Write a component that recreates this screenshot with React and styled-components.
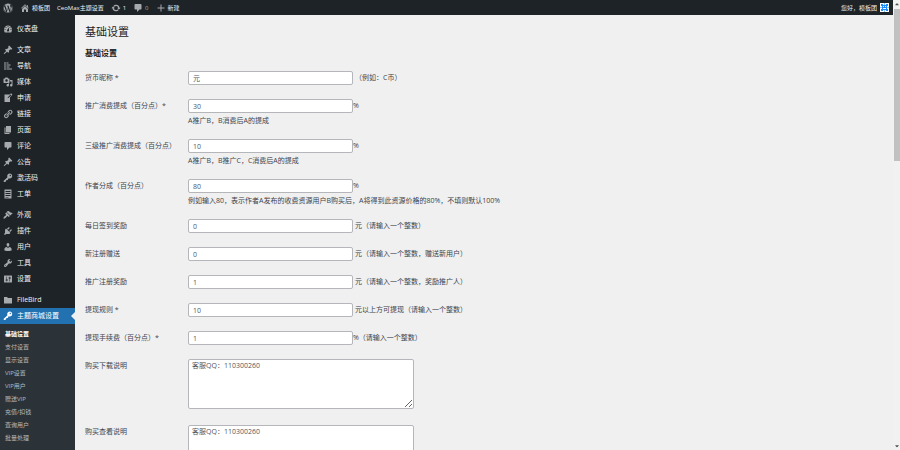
import React from "react";
import styled, { createGlobalStyle } from "styled-components";
import { FaWordpress, FaCaretUp, FaCaretDown } from "react-icons/fa";

const paths = {
    home: "M16 8.5l1.53 1.53-1.06 1.06L10 4.6l-6.47 6.49-1.06-1.06L10 2.5l4 4v-2h2v4zm-6-2.46l6 5.99V18h-4v-5H8v5H4v-5.97z",
    update: "M10.2 3.28c3.53 0 6.43 2.61 6.92 6h2.08l-3.5 4-3.5-4h2.32c-.45-1.97-2.21-3.45-4.32-3.45-1.45 0-2.73.71-3.54 1.78L4.95 5.66C6.23 4.2 8.11 3.28 10.2 3.28zm-.4 13.44c-3.52 0-6.43-2.61-6.92-6H.8l3.5-4 3.5 4H5.48c.45 1.97 2.21 3.45 4.32 3.45 1.45 0 2.73-.71 3.54-1.78l1.71 1.95c-1.28 1.46-3.15 2.38-5.25 2.38z",
    comment: "M5 2h10q.82 0 1.41.59T17 4v7q0 .82-.59 1.41T15 13h-2l-5 5v-5H5q-.82 0-1.41-.59T3 11V4q0-.82.59-1.41T5 2z",
    plus: "M17 9v2h-6v6H9v-6H3V9h6V3h2v6h6z",
    dashboard: "M3.76 17h12.48A7.98 7.98 0 0 0 18 11c0-4.42-3.58-8-8-8s-8 3.58-8 8c0 2.2.66 4.5 1.76 6zM10 4a1 1 0 1 1 0 2 1 1 0 0 1 0-2zM6 6a1 1 0 1 1 0 2 1 1 0 0 1 0-2zm8 0a1 1 0 1 1 0 2 1 1 0 0 1 0-2zm-5.37 5.55L12 7v6c0 1.1-.9 2-2 2s-2-.9-2-2c0-.57.24-1.08.63-1.45zM4 10a1 1 0 1 1 0 2 1 1 0 0 1 0-2zm12 0a1 1 0 1 1 0 2 1 1 0 0 1 0-2z",
    pin: "M10.44 3.02l1.82-1.82 6.36 6.35-1.83 1.82c-1.05-.68-2.48-.57-3.41.36l-.75.75c-.92.93-1.04 2.35-.35 3.41l-1.83 1.82-2.41-2.41-2.8 2.79c-.42.42-3.38 2.71-3.8 2.29s1.86-3.39 2.28-3.81l2.79-2.79L4.1 9.36l1.83-1.82c1.05.69 2.48.57 3.4-.36l.75-.75c.93-.92 1.05-2.35.36-3.41z",
    nav: "M3 2h2v16H3zM7 3h4v2H7zM7 7h8v2H7zM7 11h6v2H7zM7 15h11v2H7z",
    media: "M13 11V4c0-.55-.45-1-1-1h-1.67L9 1H5L3.67 3H2c-.55 0-1 .45-1 1v7c0 .55.45 1 1 1h10c.55 0 1-.45 1-1zM7 4.5a2.5 2.5 0 1 1 0 5 2.5 2.5 0 0 1 0-5zM14 6h5v10.5c0 1.38-1.12 2.5-2.5 2.5S14 17.88 14 16.5s1.12-2.5 2.5-2.5c.17 0 .34.02.5.05V9h-3V6zm-4 8.05V13h2v3.5c0 1.38-1.12 2.5-2.5 2.5S7 17.88 7 16.5 8.12 14 9.5 14c.17 0 .34.02.5.05z",
    write: "M16.89 1.2l1.41 1.41c.39.39.39 1.02 0 1.41L14 8.33V18H3V3h10.67l1.8-1.8c.4-.39 1.03-.4 1.42 0zm-5.66 8.48l5.37-5.36-1.42-1.42-5.36 5.37-.71 2.12z",
    link: "M17.74 2.76c1.68 1.69 1.68 4.41 0 6.1l-1.53 1.52c-1.12 1.12-2.7 1.47-4.14 1.09l2.62-2.61 1.52-1.53c.84-.84.84-2.2 0-3.04-.84-.85-2.2-.85-3.04 0l-.77.76-3.38 3.38c-.37-1.44-.02-3.02 1.1-4.14l1.52-1.53c1.69-1.68 4.42-1.68 6.1 0zM8.59 13.43l5.34-5.34c.42-.42.42-1.1 0-1.52-.44-.43-1.13-.39-1.53 0l-5.33 5.34c-.42.42-.42 1.1 0 1.52.44.43 1.13.39 1.52 0zm-.76 2.29l4.14-4.15c.38 1.44.03 3.02-1.09 4.14l-1.52 1.53c-1.69 1.68-4.41 1.68-6.1 0-1.68-1.68-1.68-4.42 0-6.1l1.53-1.52c1.12-1.12 2.7-1.47 4.14-1.1l-4.14 4.15c-.85.84-.85 2.2 0 3.05.84.84 2.2.84 3.04 0z",
    page: "M6 15V2h10v13H6zm-1 1h8v2H3V5h2v11z",
    key: "M16.95 2.58c1.96 1.95 1.96 5.12 0 7.07-1.51 1.51-3.75 1.84-5.59 1.01l-1.87 3.31-2.99.31L5 18H2l-1-2 7.95-7.69c-.92-1.87-.62-4.18.93-5.73 1.95-1.96 5.12-1.96 7.07 0zm-2.51 3.79a1.34 1.34 0 1 0 0-2.67 1.34 1.34 0 0 0 0 2.67z",
    form: "M3 1h14v18H3zM5 4v2h10V4zM5 8v2h10V8zM5 12v2h10v-2zM5 16v1h6v-1z",
    brush: "M14.48 11.06L7.41 3.99l1.5-1.5c.5-.56 2.3-.47 3.51.32 1.21.8 1.43 1.28 2.91 2.1 1.18.64 2.45 1.26 4.45.85zm-.71.71L6.7 4.7 4.93 6.47c-.39.39-.39 1.02 0 1.41l1.06 1.06c.39.39.39 1.03 0 1.42-.6.6-1.43 1.11-2.21 1.69-.35.26-.7.53-1.01.84C1.43 14.23.4 16.08 1.4 17.07c.99 1 2.84-.03 4.18-1.36.31-.31.58-.66.85-1.02.57-.78 1.08-1.61 1.69-2.21.39-.39 1.02-.39 1.41 0l1.06 1.06c.39.39 1.02.39 1.41 0z",
    plugin: "M13.11 4.36L9.87 7.6 8 5.73l3.24-3.24c.35-.34 1.05-.2 1.56.32.52.51.66 1.21.31 1.55zm-8 1.77l.91-1.12 9.01 9.01-1.19.84c-.71.71-2.63 1.16-3.82 1.16H6.14L4.9 17.26c-.59.59-1.54.59-2.12 0-.59-.58-.59-1.53 0-2.12l1.24-1.24v-3.88c0-1.13.4-3.19 1.09-3.89zm7.26 3.97l3.24-3.24c.34-.35 1.04-.21 1.55.31.52.51.66 1.21.31 1.55l-3.24 3.25z",
    user: "M10 9.25c-2.27 0-2.73-3.44-2.73-3.44C7 4.02 7.82 2 9.97 2c2.16 0 2.98 2.02 2.71 3.81 0 0-.41 3.44-2.68 3.44zm0 2.57L12.72 10c2.39 0 4.52 2.33 4.52 4.53v2.49s-3.65 1.13-7.24 1.13c-3.65 0-7.24-1.13-7.24-1.13v-2.49c0-2.25 1.94-4.48 4.47-4.48z",
    wrench: "M16.68 9.77c-1.34 1.34-3.3 1.67-4.95.99l-5.41 6.52c-.99.99-2.59.99-3.58 0s-.99-2.59 0-3.57l6.52-5.42c-.68-1.65-.35-3.61.99-4.95 1.28-1.28 3.12-1.62 4.72-1.06l-2.89 2.89 2.82 2.82 2.86-2.87c.53 1.58.18 3.39-1.08 4.65zM3.81 16.21c.4.39 1.04.39 1.43 0 .4-.4.4-1.04 0-1.43-.39-.4-1.03-.4-1.43 0-.39.39-.39 1.03 0 1.43z",
    sliders: "M18 16V4c0-.55-.45-1-1-1H3c-.55 0-1 .45-1 1v12c0 .55.45 1 1 1h14c.55 0 1-.45 1-1zM8 11h1a1 1 0 0 1 0 2H8v1.5a.5.5 0 0 1-1 0V13H6a1 1 0 0 1 0-2h1V5.5a.5.5 0 0 1 1 0V11zm5-2h-1a1 1 0 0 1 0-2h1V5.5a.5.5 0 0 1 1 0V7h1a1 1 0 0 1 0 2h-1v5.5a.5.5 0 0 1-1 0V9z",
    folder: "M2 4h6l2 2h8v11H2z",
};

const menu = [
    [{ text: "仪表盘", icon: "dashboard" }],
    [
        { text: "文章", icon: "pin" },
        { text: "导航", icon: "nav" },
        { text: "媒体", icon: "media" },
        { text: "申请", icon: "write" },
        { text: "链接", icon: "link" },
        { text: "页面", icon: "page" },
        { text: "评论", icon: "comment" },
        { text: "公告", icon: "pin" },
        { text: "激活码", icon: "key" },
        { text: "工单", icon: "form" },
    ],
    [
        { text: "外观", icon: "brush" },
        { text: "插件", icon: "plugin" },
        { text: "用户", icon: "user" },
        { text: "工具", icon: "wrench" },
        { text: "设置", icon: "sliders" },
    ],
    [
        { text: "FileBird", icon: "folder" },
        { text: "主题商城设置", icon: "key", active: true },
    ],
];

const submenu = ["基础设置", "支付设置", "显示设置", "VIP设置", "VIP用户", "赠送VIP", "充值/扣钱", "查询用户", "批量处理"];

const fields = [
    { id: "name", label: "货币昵称 *", value: "元", after: "（例如：C币）", gap: 2 },
    { id: "ratio", label: "推广消费提成（百分点）*", value: "30", after: "%", hint: "A推广B，B消费后A的提成" },
    { id: "ratio3", label: "三级推广消费提成（百分点）", value: "10", after: "%", hint: "A推广B，B推广C，C消费后A的提成" },
    { id: "author", label: "作者分成（百分点）", value: "80", after: "%", hint: "例如输入80，表示作者A发布的收费资源用户B购买后，A将得到此资源价格的80%，不填则默认100%" },
    { id: "sign", label: "每日签到奖励", value: "0", after: "元（请输入一个整数）", gap: 2 },
    { id: "reg", label: "新注册赠送", value: "0", after: "元（请输入一个整数，赠送新用户）", gap: 2 },
    { id: "invite", label: "推广注册奖励", value: "1", after: "元（请输入一个整数，奖励推广人）", gap: 2 },
    { id: "cash", label: "提现规则 *", value: "10", after: "元以上方可提现（请输入一个整数）", gap: 2 },
    { id: "fee", label: "提现手续费（百分点）*", value: "1", after: "%（请输入一个整数）" },
    { id: "down", label: "购买下载说明", value: "客服QQ：110300260", area: true },
    { id: "view", label: "购买查看说明", value: "客服QQ：110300260", area: true },
];

const Icon = ({ name, size = 10 }) => (
    <svg width={size} height={size} viewBox="0 0 20 20" fill="currentColor" fillRule="evenodd" aria-hidden="true">
        <path d={paths[name]} />
    </svg>
);

const App = () => {
    return (
        <>
            <GlobalStyle />
            <Page>
                <Main>
                    <AdminBar>
                        <BarLink href="#" aria-label="WordPress"><FaWordpress size={10} /></BarLink>
                        <BarLink href="#"><Icon name="home" />模板团</BarLink>
                        <BarLink href="#">CeoMax主题设置</BarLink>
                        <BarLink href="#"><Icon name="update" />1</BarLink>
                        <BarLink href="#" $dim><Icon name="comment" />0</BarLink>
                        <BarLink href="#"><Icon name="plus" />新建</BarLink>
                        <Account href="#">
                            您好，模板团
                            <Avatar viewBox="0 0 9 9" aria-hidden="true">
                                <path fill="#fff" d="M0 0h9v9H0z" />
                                <path fill="#1e8cff" d="M1 1h2v1h3V1h2v2H7v3h1v2H6V7H3v1H1V6h1V3H1z" />
                                <path fill="#8cc4ff" d="M0 4h2v1H0zM7 4h2v1H7zM4 0h1v2H4zM4 7h1v2H4z" />
                                <path fill="#fff" d="M3 3h1v1H3zM5 3h1v1H5zM3 5h3v1H3z" />
                            </Avatar>
                        </Account>
                    </AdminBar>
                    <Body>
                        <Sidebar>
                            {menu.map((group, index) => (
                                <MenuGroup key={index}>
                                    {group.map(({ text, icon, active }) => (
                                        <li key={text}>
                                            <MenuLink href="#" $active={active}>
                                                <Icon name={icon} />
                                                {text}
                                            </MenuLink>
                                        </li>
                                    ))}
                                </MenuGroup>
                            ))}
                            <SubMenu>
                                {submenu.map((text, index) => (
                                    <li key={text}>
                                        <SubLink href="#" $current={index === 0}>{text}</SubLink>
                                    </li>
                                ))}
                            </SubMenu>
                        </Sidebar>
                        <Content>
                            <Title>基础设置</Title>
                            <Subtitle>基础设置</Subtitle>
                            <form>
                                {fields.map(({ id, label, value, after, hint, area, gap }) => (
                                    <Field key={id}>
                                        <Label htmlFor={id}>{label}</Label>
                                        <div>
                                            {area ? (
                                                <TextArea id={id} defaultValue={value} />
                                            ) : (
                                                <Control $gap={gap}>
                                                    <Input id={id} type="text" defaultValue={value} />
                                                    <span>{after}</span>
                                                </Control>
                                            )}
                                            {hint && <Hint>{hint}</Hint>}
                                        </div>
                                    </Field>
                                ))}
                            </form>
                        </Content>
                    </Body>
                </Main>
                <ScrollTrack aria-hidden="true">
                    <FaCaretUp size={6} />
                    <Thumb />
                    <FaCaretDown size={6} />
                </ScrollTrack>
            </Page>
        </>
    );
};

const GlobalStyle = createGlobalStyle`
    * {
        box-sizing: border-box;
    }
    body {
        margin: 0;
        background: #f0f0f1;
        color: #3c434a;
        font-family: "Open Sans", "Noto Sans CJK SC", sans-serif;
        font-size: 7px;
        line-height: 12px;
    }
    ul {
        list-style: none;
        margin: 0;
        padding: 0;
    }
    a {
        text-decoration: none;
    }
    svg {
        flex: none;
    }
`;

const Page = styled.div`
    display: flex;
    height: 100vh;
    overflow: hidden;
`;

const Main = styled.div`
    flex: 1;
    min-width: 0;
    display: flex;
    flex-direction: column;
`;

const AdminBar = styled.header`
    flex: none;
    height: 15px;
    display: flex;
    align-items: center;
    gap: 7px;
    padding: 0 4px 0 3px;
    background: #1d2327;
    font-size: 6px;
`;

const BarLink = styled.a`
    display: flex;
    align-items: center;
    gap: 2px;
    color: ${({ $dim }) => ($dim ? "#a7aaad" : "#f0f0f1")};
    white-space: nowrap;
    svg {
        color: #a7aaad;
    }
`;

const Account = styled(BarLink)`
    margin-left: auto;
    gap: 3px;
`;

const Avatar = styled.svg`
    width: 9px;
    height: 9px;
`;

const Body = styled.div`
    flex: 1;
    min-height: 0;
    display: flex;
`;

const Sidebar = styled.nav`
    flex: none;
    width: 75px;
    padding-top: 6px;
    background: #1d2327;
`;

const MenuGroup = styled.ul`
    & + & {
        margin-top: 5px;
    }
`;

const MenuLink = styled.a`
    display: flex;
    align-items: center;
    gap: 4px;
    height: 16px;
    padding-left: 3px;
    color: ${({ $active }) => ($active ? "#fff" : "#f0f0f1")};
    background: ${({ $active }) => ($active ? "#2271b1" : "transparent")};
    svg {
        color: ${({ $active }) => ($active ? "#fff" : "#a7aaad")};
    }
    &::after {
        content: "";
        display: ${({ $active }) => ($active ? "block" : "none")};
        margin-left: auto;
        border: 4px solid transparent;
        border-left-width: 0;
        border-right-color: #f0f0f1;
    }
`;

const SubMenu = styled.ul`
    height: 100%;
    padding-top: 4px;
    background: #2c3338;
`;

const SubLink = styled.a`
    display: block;
    padding-left: 5px;
    font-size: 6px;
    line-height: 13px;
    color: ${({ $current }) => ($current ? "#fff" : "#b9bcbf")};
    font-weight: ${({ $current }) => ($current ? 700 : 400)};
`;

const Content = styled.main`
    flex: 1;
    min-width: 0;
    padding: 8px 10px 0;
    overflow: hidden;
`;

const Title = styled.h1`
    margin: 0;
    font-size: 11px;
    font-weight: 400;
    line-height: 17px;
    color: #1d2327;
`;

const Subtitle = styled.h2`
    margin: 6px 0 5px;
    font-size: 8px;
    font-weight: 700;
    line-height: 13px;
    color: #1d2327;
`;

const Field = styled.div`
    display: grid;
    grid-template-columns: 103px 1fr;
    padding: 7px 0;
`;

const Label = styled.label`
    line-height: 14px;
    color: #3c434a;
    white-space: nowrap;
`;

const Control = styled.div`
    display: flex;
    align-items: center;
    gap: ${({ $gap }) => $gap || 0}px;
    height: 14px;
`;

const Input = styled.input`
    width: 165px;
    height: 14px;
    padding: 0 4px;
    border: 1px solid #b4b6b9;
    border-radius: 2px;
    background: #fff;
    color: #50575e;
    font: inherit;
`;

const TextArea = styled.textarea`
    display: block;
    width: 226px;
    height: 50px;
    margin-bottom: 2px;
    padding: 0 3px;
    border: 1px solid #b4b6b9;
    border-radius: 2px;
    background: #fff;
    color: #50575e;
    font: inherit;
    resize: vertical;
`;

const Hint = styled.p`
    margin: 0;
    padding-top: 2px;
    line-height: 12px;
    height: 12px;
`;

const ScrollTrack = styled.div`
    flex: none;
    width: 7px;
    display: flex;
    flex-direction: column;
    align-items: center;
    justify-content: space-between;
    gap: 2px;
    padding: 1px 0;
    background: #f1f1f1;
    color: #505050;
`;

const Thumb = styled.div`
    width: 6px;
    height: 34%;
    margin-bottom: auto;
    background: #c1c1c1;
`;

export default App;
